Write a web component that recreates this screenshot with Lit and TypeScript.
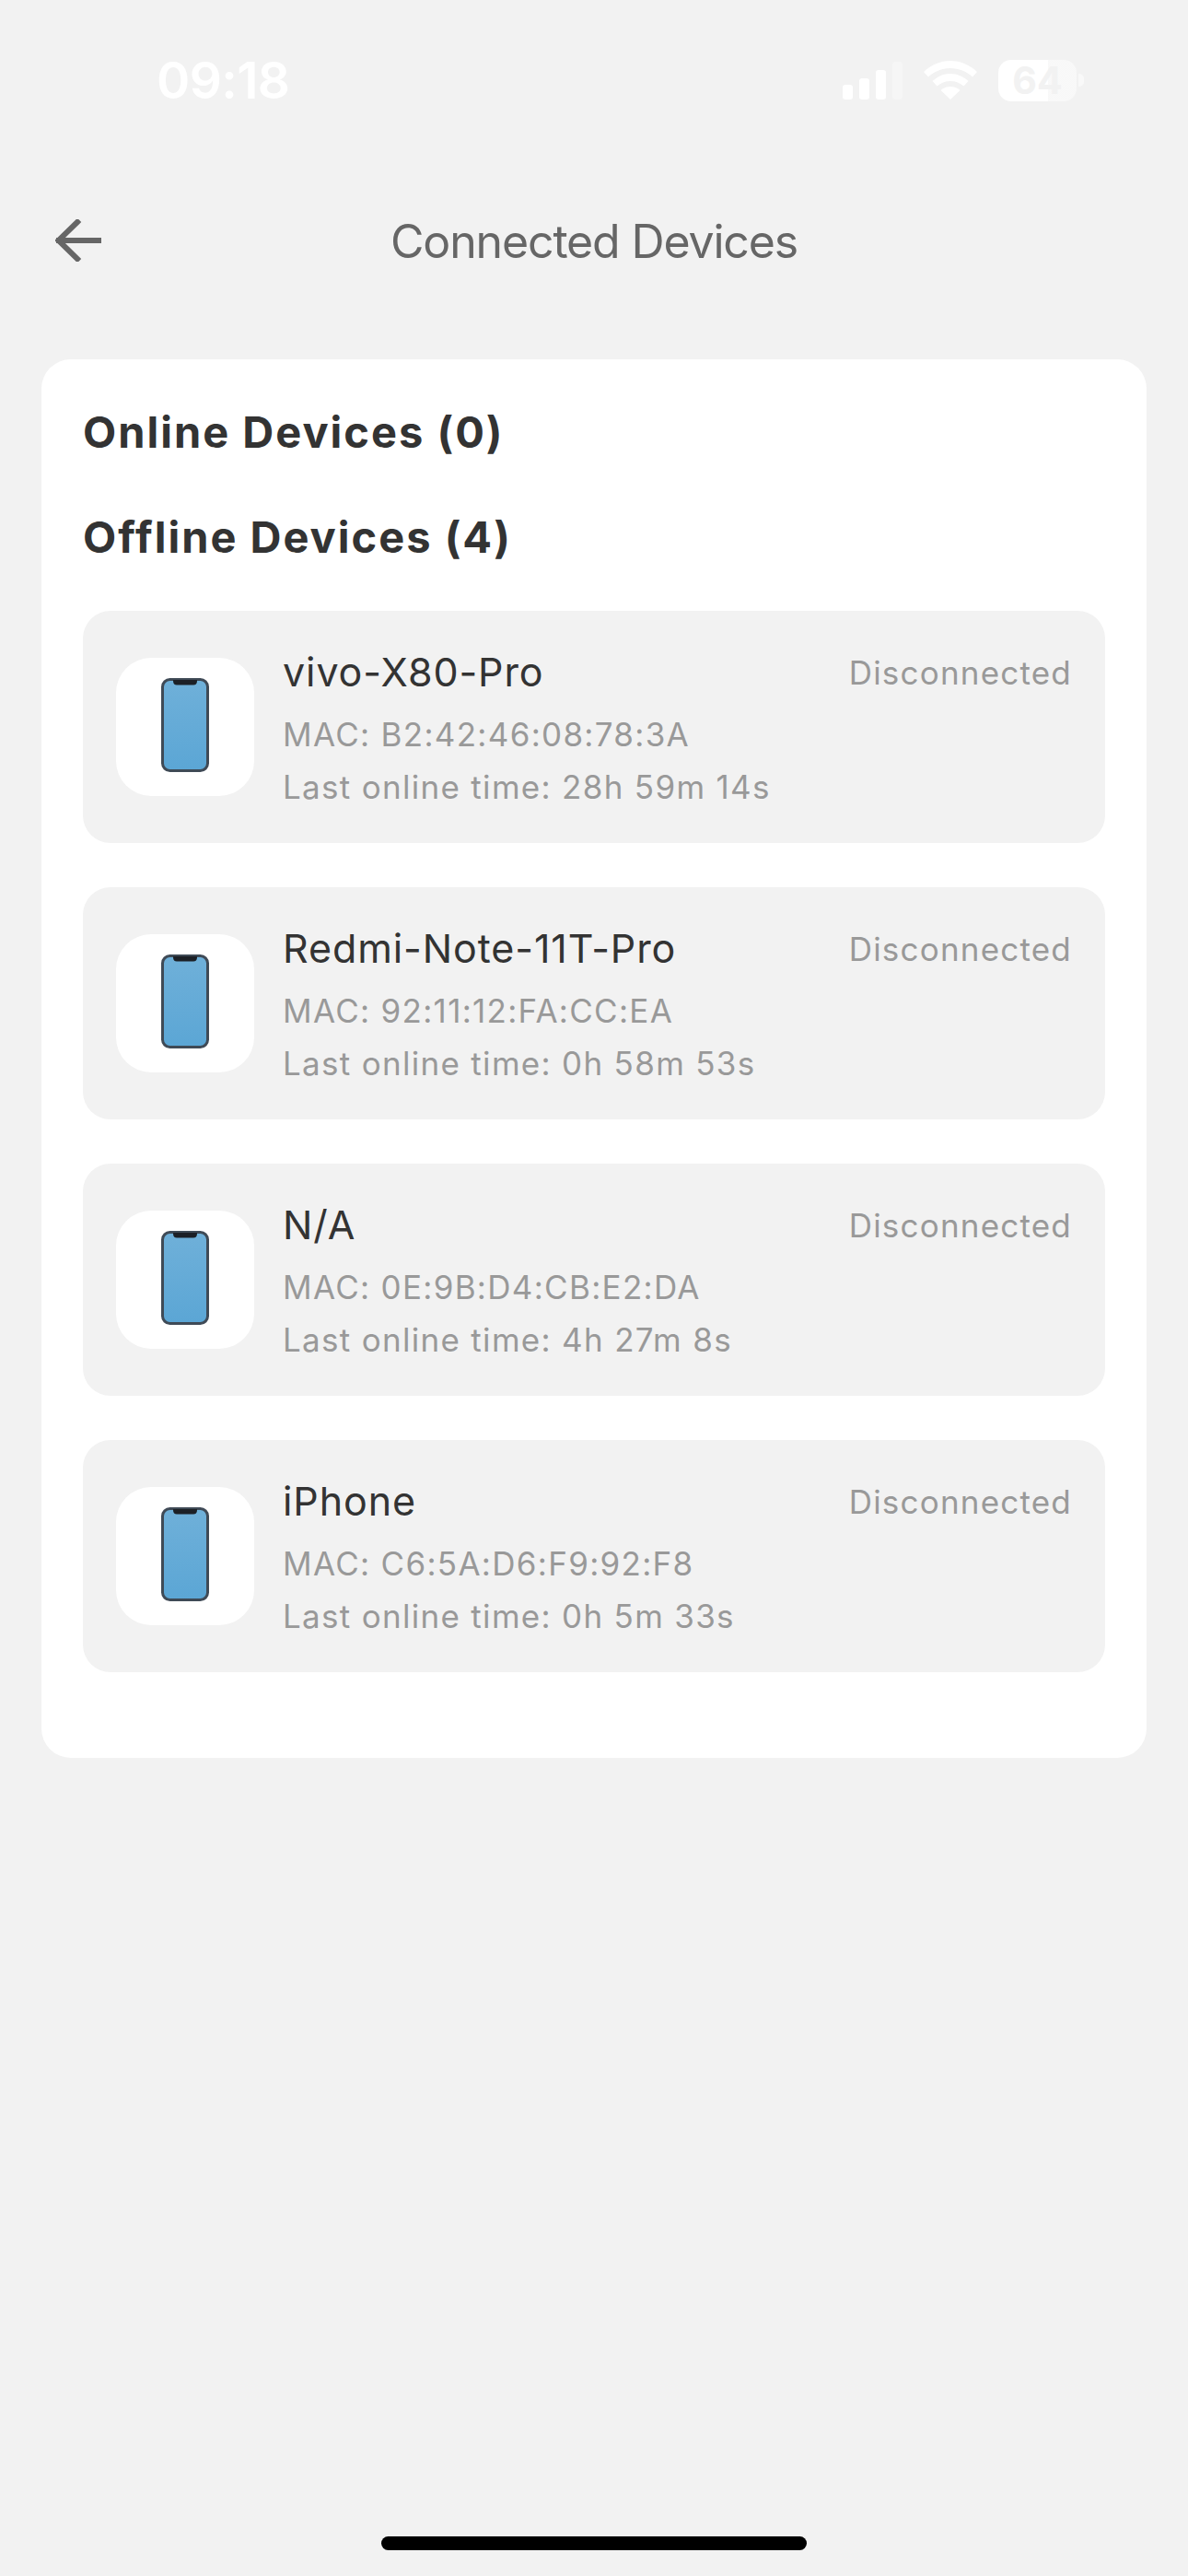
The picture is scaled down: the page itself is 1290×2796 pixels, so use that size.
import { LitElement, html, css, svg } from "lit";
import { customElement } from "lit/decorators.js";

const devices = [
  { name: "vivo-X80-Pro", mac: "B2:42:46:08:78:3A", last: "28h 59m 14s" },
  { name: "Redmi-Note-11T-Pro", mac: "92:11:12:FA:CC:EA", last: "0h 58m 53s" },
  { name: "N/A", mac: "0E:9B:D4:CB:E2:DA", last: "4h 27m 8s" },
  { name: "iPhone", mac: "C6:5A:D6:F9:92:F8", last: "0h 5m 33s" },
];

const phone = svg`<svg class="phone" width="52" height="102" viewBox="0 0 52 102">
  <defs><linearGradient id="scr" x1="0" y1="0" x2="0" y2="1"><stop offset="0" stop-color="#6fb0d9"/><stop offset="1" stop-color="#5ba6d5"/></linearGradient></defs>
  <rect x="1.500" y="1.500" width="49" height="99" rx="8" fill="url(#scr)" stroke="#3f4a56" stroke-width="3"/>
  <path d="M13 2h26v1c0 3-1.500 4.500-4 4.500H17c-2.500 0-4-1.500-4-4.500z" fill="#1c2026"/>
</svg>`;

@customElement("app-root")
export class AppRoot extends LitElement {
  static styles = css`
    :host {
      display: block;
      width: 1290px;
      height: 2796px;
      background: #f2f2f2;
      font-family: Inter, "Liberation Sans", sans-serif;
      overflow: hidden;
    }
    .page { display: flex; flex-direction: column; height: 2796px; }
    .status {
      height: 64px;
      margin-top: 55px;
      padding: 0 113px 0 170px;
      display: flex;
      align-items: center;
      justify-content: space-between;
      color: #fff;
    }
    .time { font-size: 55px; font-weight: 600; letter-spacing: -0.6px; line-height: 64px; }
    .sys { display: flex; align-items: center; gap: 23px; }
    .bars { display: flex; align-items: flex-end; gap: 7px; height: 41px; margin-top: 1px; }
    .bars i { display: block; width: 11px; border-radius: 3px; background: #fff; }
    .bars i.h1 { height: 16px; }
    .bars i.h2 { height: 23px; }
    .bars i.h3 { height: 32px; }
    .bars i.h4 { height: 41px; background: rgba(255,255,255,.3); }
    .batt { display: flex; align-items: center; gap: 2px; }
    .batt-body {
      width: 85px; height: 45px; border-radius: 14px;
      display: flex; align-items: center; justify-content: center;
      color: #f2f2f2; font-size: 41px; font-weight: 700; line-height: 45px;
      background: linear-gradient(90deg, #fff 0 54px, rgba(255,255,255,.5) 54px);
    }
    .nub { width: 6px; height: 14px; border-radius: 0 5px 5px 0; background: rgba(255,255,255,.5); }
    .nav {
      height: 84px;
      margin-top: 101px;
      display: grid;
      grid-template-columns: 1fr auto 1fr;
      align-items: center;
    }
    .back { display: block; margin-left: 60px; margin-top: -2px; }
    .title {
      font-size: 50px; font-weight: 400; color: #666; letter-spacing: -1.15px;
      line-height: 84px; white-space: nowrap;
    }
    .card {
      margin: 86px 45px 0;
      background: #fff;
      border-radius: 32px;
      padding: 0 45px 93px;
      display: flex;
      flex-direction: column;
    }
    h2 {
      margin: 0;
      font-size: 47px;
      font-weight: 700;
      color: #333;
      letter-spacing: 2px;
      line-height: 56px;
    }
    h2.on { margin-top: 51px; }
    h2.off { margin-top: 58px; }
    .list { display: flex; flex-direction: column; gap: 48px; margin-top: 52px; }
    .row {
      height: 252px; box-sizing: border-box;
      background: #f2f2f2;
      border-radius: 30px;
      padding: 51px 36px 0;
      display: flex;
      align-items: flex-start;
    }
    .ico {
      width: 150px; height: 150px; border-radius: 38px; background: #fff;
      display: flex; align-items: center; justify-content: center; flex: none;
    }
    .phone { margin-bottom: 4px; }
    .info { margin-left: 31px; flex: 1; min-width: 0; margin-top: -15px; }
    .top { display: flex; justify-content: space-between; align-items: center; height: 60px; }
    .name { font-size: 43px; color: #333; letter-spacing: 0.9px; line-height: 60px; white-space: nowrap; }
    .state { font-size: 35px; color: #999; letter-spacing: 1.2px; line-height: 60px; margin-top: 2px; }
    .line { font-size: 35px; color: #999; letter-spacing: 1.3px; line-height: 57px; white-space: nowrap; }
    .line.mac { margin-top: 10px; }
    .spacer { flex: 1; }
    .home {
      width: 462px; height: 15px; border-radius: 8px; background: #000;
      align-self: center; margin-bottom: 28px;
    }
  `;

  render() {
    return html`<div class="page">
      <div class="status">
        <span class="time">09:18</span>
        <div class="sys">
          <div class="bars"><i class="h1"></i><i class="h2"></i><i class="h3"></i><i class="h4"></i></div>
          <svg width="58" height="42" viewBox="0 0 58 42" fill="#fff">
            <path d="M29 0C18 0 8 4.500 0 12l5 5.500C11.500 11.500 20 8 29 8s17.500 3.500 24 9.500L58 12C50 4.500 40 0 29 0z"/>
            <path d="M29 14c-7.500 0-14 3-19.500 8l5 5.500C18.500 24 23.500 22 29 22s10.500 2 14.500 5.500l5-5.500C43 17 36.500 14 29 14z"/>
            <path d="M29 28c-4 0-7.500 1.500-10.500 4L29 42l10.500-10C36.500 29.500 33 28 29 28z"/>
          </svg>
          <div class="batt"><div class="batt-body">64</div><div class="nub"></div></div>
        </div>
      </div>
      <div class="nav">
        <svg class="back" width="50" height="46" viewBox="0 0 50 46" fill="none" stroke="#666" stroke-width="6" stroke-linecap="square">
          <path d="M48 23H4"/><path d="M24 3 3.500 23 24 43"/>
        </svg>
        <div class="title">Connected Devices</div>
        <div></div>
      </div>
      <div class="card">
        <h2 class="on">Online Devices (0)</h2>
        <h2 class="off">Offline Devices (4)</h2>
        <div class="list">
          ${devices.map(
            (d) => html`<div class="row">
              <div class="ico">${phone}</div>
              <div class="info">
                <div class="top"><span class="name">${d.name}</span><span class="state">Disconnected</span></div>
                <div class="line mac">MAC: ${d.mac}</div>
                <div class="line">Last online time: ${d.last}</div>
              </div>
            </div>`
          )}
        </div>
      </div>
      <div class="spacer"></div>
      <div class="home"></div>
    </div>`;
  }
}
